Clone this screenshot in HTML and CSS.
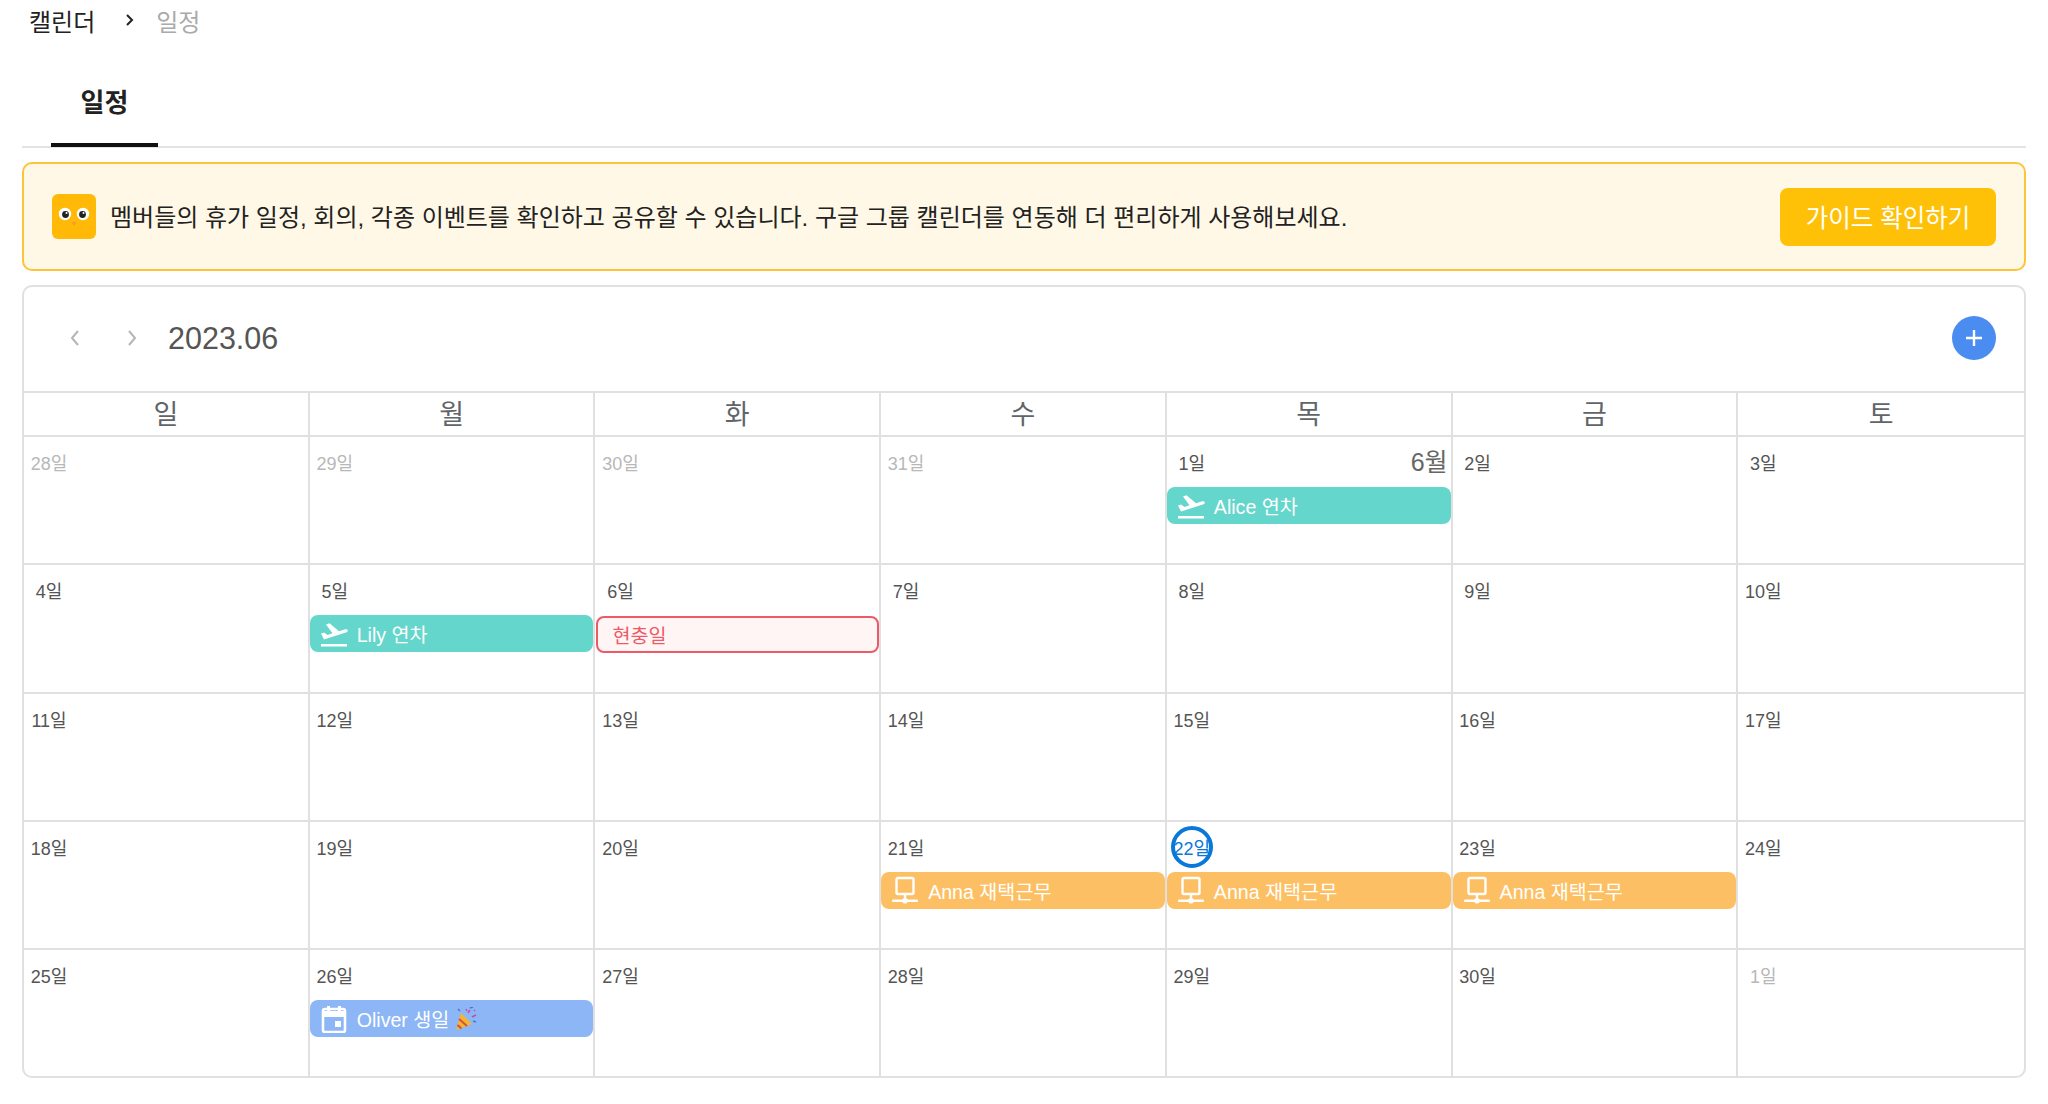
FILE: index.html
```html
<!DOCTYPE html>
<html lang="ko">
<head>
    <meta charset="UTF-8">
    <meta name="viewport" content="width=device-width, initial-scale=1.0">
    <title>일정</title>
    <link rel="stylesheet" href="styles.css">
</head>
<body>
    <div class="breadcrumb">
        <span class="crumb">캘린더</span>
        <svg class="crumb-sep" width="10" height="14" viewBox="0 0 10 14"><path d="M2 2l5 5-5 5" fill="none" stroke="#222" stroke-width="2"/></svg>
        <span class="crumb current">일정</span>
    </div>

    <div class="tabs">
        <div class="tab">일정</div>
    </div>

    <div class="banner">
        <svg class="owl" width="44" height="45" viewBox="0 0 44 45">
            <rect width="44" height="45" rx="6" fill="#ffb906"/>
            <circle cx="13" cy="20" r="6.200" fill="#fff"/>
            <circle cx="31" cy="20" r="6.200" fill="#fff"/>
            <circle cx="13.500" cy="20.500" r="3.400" fill="#222"/>
            <circle cx="30.500" cy="20.500" r="3.400" fill="#222"/>
            <circle cx="14.500" cy="19" r="1" fill="#fff"/>
            <circle cx="31.500" cy="19" r="1" fill="#fff"/>
            <path d="M19.500 28h5l-2.500 4z" fill="#f7983a"/>
        </svg>
        <p class="banner-text">멤버들의 휴가 일정, 회의, 각종 이벤트를 확인하고 공유할 수 있습니다. 구글 그룹 캘린더를 연동해 더 편리하게 사용해보세요.</p>
        <button class="guide-btn">가이드 확인하기</button>
    </div>

    <div class="calendar">
        <div class="cal-head">
            <svg class="nav" width="12" height="18" viewBox="0 0 12 18"><path d="M9 2L3 9l6 7" fill="none" stroke="#b5b5b5" stroke-width="2"/></svg>
            <svg class="nav next" width="12" height="18" viewBox="0 0 12 18"><path d="M3 2l6 7-6 7" fill="none" stroke="#b5b5b5" stroke-width="2"/></svg>
            <span class="month">2023.06</span>
            <button class="add-btn">
                <svg width="20" height="20" viewBox="0 0 20 20"><path d="M10 2v16M2 10h16" stroke="#fff" stroke-width="2.400"/></svg>
            </button>
        </div>

        <div class="weekdays">
            <div>일</div><div>월</div><div>화</div><div>수</div><div>목</div><div>금</div><div>토</div>
        </div>

        <svg class="icon-defs" width="0" height="0">
            <symbol id="i-plane" viewBox="0 0 28 28">
                <path d="M1 13.500l3-1 3.500 2.500 5-1.700-6.500-8.800 3.500-1.200 9.500 8 5.500-1.900c1.600-.5 3 .1 3.300 1 .3 1-.6 1.700-2 2.200L4 19.500z" fill="#fff"/>
                <rect x="1" y="24" width="26" height="2.500" fill="#fff"/>
            </symbol>
            <symbol id="i-remote" viewBox="0 0 28 28">
                <rect x="5.500" y="2" width="17" height="16" rx="1.500" fill="none" stroke="#fff" stroke-width="2.400"/>
                <rect x="12.800" y="18" width="2.400" height="6" fill="#fff"/>
                <rect x="1" y="23.500" width="26" height="2.400" rx="1" fill="#fff"/>
                <circle cx="14" cy="24.700" r="2.800" fill="#fff"/>
            </symbol>
            <symbol id="i-date" viewBox="0 0 28 28">
                <path d="M3 6a2 2 0 0 1 2-2h18a2 2 0 0 1 2 2v19a2 2 0 0 1-2 2H5a2 2 0 0 1-2-2z" fill="none" stroke="#fff" stroke-width="2.600"/>
                <path d="M3 6h22v6H3zM7 1h3v5H7zM18 1h3v5h-3z" fill="#fff"/>
                <rect x="15" y="16" width="6" height="6" fill="#fff"/>
            </symbol>
        </svg>

        <div class="grid">
            <div class="cell"><span class="date muted">28일</span></div>
            <div class="cell"><span class="date muted">29일</span></div>
            <div class="cell"><span class="date muted">30일</span></div>
            <div class="cell"><span class="date muted">31일</span></div>
            <div class="cell">
                <span class="date">1일</span><span class="month-label">6월</span>
                <div class="event teal"><svg class="ev-icon"><use href="#i-plane"/></svg>Alice 연차</div>
            </div>
            <div class="cell"><span class="date">2일</span></div>
            <div class="cell"><span class="date">3일</span></div>

            <div class="cell"><span class="date">4일</span></div>
            <div class="cell">
                <span class="date">5일</span>
                <div class="event teal"><svg class="ev-icon"><use href="#i-plane"/></svg>Lily 연차</div>
            </div>
            <div class="cell">
                <span class="date">6일</span>
                <div class="event holiday">현충일</div>
            </div>
            <div class="cell"><span class="date">7일</span></div>
            <div class="cell"><span class="date">8일</span></div>
            <div class="cell"><span class="date">9일</span></div>
            <div class="cell"><span class="date">10일</span></div>

            <div class="cell"><span class="date">11일</span></div>
            <div class="cell"><span class="date">12일</span></div>
            <div class="cell"><span class="date">13일</span></div>
            <div class="cell"><span class="date">14일</span></div>
            <div class="cell"><span class="date">15일</span></div>
            <div class="cell"><span class="date">16일</span></div>
            <div class="cell"><span class="date">17일</span></div>

            <div class="cell"><span class="date">18일</span></div>
            <div class="cell"><span class="date">19일</span></div>
            <div class="cell"><span class="date">20일</span></div>
            <div class="cell">
                <span class="date">21일</span>
                <div class="event orange"><svg class="ev-icon"><use href="#i-remote"/></svg>Anna 재택근무</div>
            </div>
            <div class="cell">
                <span class="date today">22일</span>
                <div class="event orange"><svg class="ev-icon"><use href="#i-remote"/></svg>Anna 재택근무</div>
            </div>
            <div class="cell">
                <span class="date">23일</span>
                <div class="event orange"><svg class="ev-icon"><use href="#i-remote"/></svg>Anna 재택근무</div>
            </div>
            <div class="cell"><span class="date">24일</span></div>

            <div class="cell"><span class="date">25일</span></div>
            <div class="cell">
                <span class="date">26일</span>
                <div class="event blue">
                    <svg class="ev-icon"><use href="#i-date"/></svg>Oliver 생일
                    <svg class="popper" width="22" height="24" viewBox="0 0 22 24">
                        <path d="M6 6L1 23l16-6z" fill="#f5b52e"/>
                        <path d="M4 12l8 7M2.500 18l4 3.500" stroke="#d8503f" stroke-width="2" fill="none"/>
                        <path d="M13 6l2-3M17 10l4-2M11 2l1 2M19 3l1 1" stroke="#c04fa0" stroke-width="1.500" fill="none"/>
                        <path d="M3 2l2 2M18 14l3 1M15 1l3-1" stroke="#4a78c8" stroke-width="1.500" fill="none"/>
                    </svg>
                </div>
            </div>
            <div class="cell"><span class="date">27일</span></div>
            <div class="cell"><span class="date">28일</span></div>
            <div class="cell"><span class="date">29일</span></div>
            <div class="cell"><span class="date">30일</span></div>
            <div class="cell"><span class="date muted">1일</span></div>
        </div>
    </div>
</body>
</html>
```

FILE: styles.css
```css
* {
    box-sizing: border-box;
}
body {
    margin: 0;
    padding: 0 22px;
    font-family: "Liberation Sans", "Noto Sans CJK KR", sans-serif;
    color: #222;
    background: #fff;
}
.breadcrumb {
    display: flex;
    align-items: center;
    height: 40px;
    padding-left: 7px;
    font-size: 24px;
}
.crumb-sep {
    margin: 0 21px 0 30px;
}
.crumb.current {
    color: #aaa;
}
.tabs {
    height: 108px;
    border-bottom: 2px solid #e3e3e3;
    padding-left: 29px;
    display: flex;
    align-items: flex-end;
}
.tab {
    width: 107px;
    height: 70px;
    margin-bottom: -1px;
    border-bottom: 4px solid #111;
    text-align: center;
    font-size: 26px;
    font-weight: 700;
    line-height: 52px;
}
.banner {
    display: flex;
    align-items: center;
    height: 109px;
    margin-top: 14px;
    padding: 0 28px;
    background: #fff8e6;
    border: 2px solid #fcc43a;
    border-radius: 10px;
}
.owl {
    flex-shrink: 0;
}
.banner-text {
    flex: 1;
    margin: 0 0 3px 14px;
    font-size: 24px;
}
.guide-btn {
    width: 216px;
    height: 58px;
    border: none;
    border-radius: 8px;
    background: #ffc107;
    color: #fff;
    font-family: inherit;
    font-size: 24.500px;
}
.calendar {
    margin-top: 14px;
    height: 793px;
    border: 2px solid #e0e0e0;
    border-radius: 10px;
}
.cal-head {
    display: flex;
    align-items: center;
    height: 104px;
    padding: 0 28px 2px 45px;
}
.nav.next {
    margin-left: 45px;
}
.month {
    margin-left: 30px;
    font-size: 30.500px;
    color: #555;
}
.add-btn {
    margin-left: auto;
    width: 44px;
    height: 44px;
    padding: 0;
    border: none;
    border-radius: 50%;
    background: #4a8cf0;
    display: flex;
    align-items: center;
    justify-content: center;
}
.weekdays {
    display: grid;
    grid-template-columns: repeat(7, 1fr);
    height: 46px;
    border-top: 2px solid #e0e0e0;
    border-bottom: 2px solid #e0e0e0;
    text-align: center;
    font-size: 27px;
    line-height: 44px;
    color: #5f6568;
}
.weekdays div:not(:last-child) {
    border-right: 2px solid #e0e0e0;
}
.icon-defs {
    position: absolute;
}
.grid {
    display: grid;
    grid-template-columns: repeat(7, 1fr);
    grid-auto-rows: 128.300px;
}
.cell {
    position: relative;
    border-right: 2px solid #e0e0e0;
    border-bottom: 2px solid #e0e0e0;
}
.cell:nth-child(7n) {
    border-right: none;
}
.cell:nth-last-child(-n + 7) {
    border-bottom: none;
}
.date {
    display: flex;
    align-items: center;
    justify-content: center;
    width: 42px;
    height: 42px;
    margin: 4px 0 0 4px;
    font-size: 18px;
    color: #555;
    white-space: nowrap;
}
.date.muted {
    color: #b8b8b8;
}
.date.today {
    border: 4px solid #0a78d8;
    border-radius: 50%;
    color: #0a78d8;
}
.month-label {
    position: absolute;
    top: 5px;
    right: 3px;
    font-size: 25px;
    color: #666;
}
.event {
    display: flex;
    align-items: center;
    height: 37px;
    margin-top: 4px;
    padding-left: 10px;
    border-radius: 8px;
    color: #fff;
    font-size: 19.600px;
    white-space: nowrap;
}
.ev-icon {
    width: 28px;
    height: 28px;
    margin-right: 9px;
    flex-shrink: 0;
}
.popper {
    margin-left: 6px;
}
.teal {
    background: #65d6cc;
}
.orange {
    background: #fdbf63;
}
.blue {
    background: #8cb6f6;
}
.holiday {
    margin-top: 5px;
    margin-left: 1px;
    background: #fff5f5;
    border: 2px solid #ec5a68;
    color: #ec5a68;
    padding-left: 14px;
}
```
